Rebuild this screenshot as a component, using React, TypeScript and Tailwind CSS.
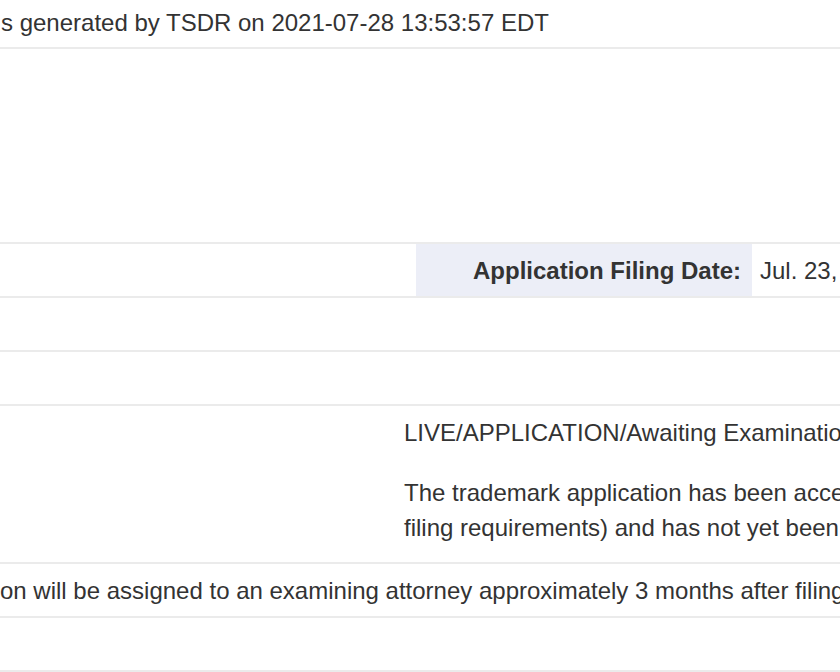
export default function App() {
  const row = "border-b-2 border-[#ebebeb] box-border";
  return (
    <div className="w-[840px] h-[672px] overflow-hidden bg-white text-[#333333] text-[24px] leading-[33px] font-['Liberation_Sans',Arial,sans-serif]">
      <div className={`${row} h-[49px] pt-[6px] pl-[1px] whitespace-nowrap`}>
        s generated by TSDR on 2021-07-28 13:53:57 EDT
      </div>

      <div className={`${row} h-[195px]`} />

      <div className={`${row} h-[54px] flex whitespace-nowrap`}>
        <div className="w-[416px] shrink-0" />
        <div className="w-[336px] shrink-0 bg-[#eceef7] flex items-center justify-end pr-[11px] font-bold">
          Application Filing Date:
        </div>
        <div className="flex items-center pl-[8px]">Jul. 23, 2021</div>
      </div>

      <div className={`${row} h-[54px]`} />
      <div className={`${row} h-[54px]`} />

      <div className={`${row} h-[158px] flex whitespace-nowrap`}>
        <div className="w-[404px] shrink-0" />
        <div className="pt-[10px]">
          <p>LIVE/APPLICATION/Awaiting Examination</p>
          <p className="mt-[26px] leading-[35px]">
            The trademark application has been accepted by the Office (has met the minimum
            <br />
            filing requirements) and has not yet been assigned to an examining attorney.
          </p>
        </div>
      </div>

      <div className={`${row} h-[54px] flex items-center whitespace-nowrap`}>
        on will be assigned to an examining attorney approximately 3 months after filing date.
      </div>

      <div className={`${row} h-[54px]`} />
    </div>
  );
}
